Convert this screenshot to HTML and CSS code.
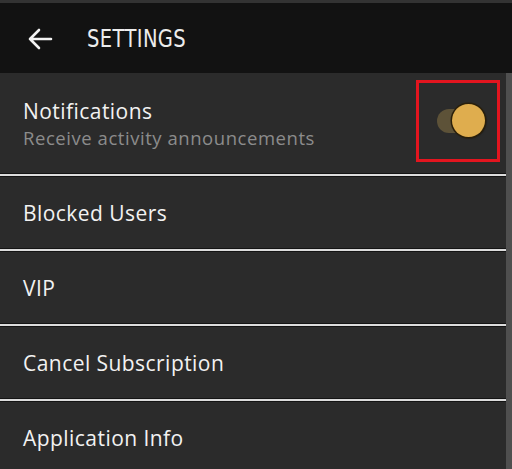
FILE: index.html
```html
<!DOCTYPE html>
<html>
<head>
<meta charset="utf-8">
<link rel="stylesheet" href="styles.css">
</head>
<body>
<div class="topstrip"></div>
<header class="appbar">
  <svg class="back" width="26" height="22" viewBox="0 0 26 22">
    <path d="M24 11H3M12 2L3 11l9 9" fill="none" stroke="#f2f2f2" stroke-width="2.6" stroke-linecap="round" stroke-linejoin="round"/>
  </svg>
  <h1 class="title">SETTINGS</h1>
</header>
<div class="content">
  <ul class="list">
    <li class="row row-tall">
      <div class="texts">
        <div class="label">Notifications</div>
        <div class="sub">Receive activity announcements</div>
      </div>
      <div class="highlight">
        <div class="switch"><div class="track"></div><div class="knob"></div></div>
      </div>
    </li>
    <li class="divider"></li>
    <li class="row"><div class="label">Blocked Users</div></li>
    <li class="divider"></li>
    <li class="row"><div class="label">VIP</div></li>
    <li class="divider"></li>
    <li class="row"><div class="label">Cancel Subscription</div></li>
    <li class="divider"></li>
    <li class="row"><div class="label">Application Info</div></li>
  </ul>
  <div class="scrollbar"></div>
</div>
</body>
</html>
```
FILE: styles.css
```css
html, body { margin: 0; padding: 0; }
body {
  width: 512px;
  height: 469px;
  overflow: hidden;
  background: #2b2b2b;
  font-family: "Open Sans", "Liberation Sans", sans-serif;
}
.topstrip { height: 3px; background: #333333; }
.appbar {
  height: 70px;
  background: #121212;
  display: flex;
  align-items: center;
  padding-left: 27px;
  box-sizing: border-box;
}
.back { display: block; margin-top: 1px; }
.title {
  margin: 0 0 0 34px;
  font-family: "DejaVu Sans", sans-serif;
  font-weight: normal;
  font-size: 25px;
  letter-spacing: 0.5px;
  color: #ececec;
  transform: scaleX(0.78);
  transform-origin: left center;
}
.content { display: flex; height: 396px; }
.list { list-style: none; margin: 0; padding: 0; flex: 1; }
.scrollbar { width: 6px; background: #4f4f4f; }
.row {
  height: 71px;
  display: flex;
  align-items: center;
  padding-left: 23px;
  background: #2b2b2b;
}
.row-tall { height: 100px; justify-content: space-between; padding-right: 6px; }
.label { font-size: 21px; letter-spacing: 0.45px; color: #f2f2f2; line-height: 26px; }
.sub { font-size: 18.5px; letter-spacing: 0.55px; color: #8c8c8c; line-height: 24px; margin-top: 2px; }
.texts { margin-top: 2px; }
.divider {
  height: 2px;
  background: #dcdcdc;
  border-top: 1px solid #141414;
  border-bottom: 1px solid #141414;
}
.highlight {
  width: 84px;
  height: 82px;
  box-sizing: border-box;
  border: 3px solid #e3151f;
  display: flex;
  align-items: center;
  justify-content: center;
  margin-top: -4px;
}
.switch { position: relative; width: 48px; height: 34px; margin-left: 6px; }
.track {
  position: absolute;
  left: 0; top: 5px;
  width: 34px; height: 24px;
  border-radius: 12px;
  background: #5d5238;
}
.knob {
  position: absolute;
  left: 15px; top: 0;
  width: 33px; height: 33px;
  border-radius: 50%;
  background: #dfad4e;
  box-shadow: 0 0 0 1.5px #2a1f0a, 1px 1px 2px rgba(0,0,0,0.6);
}
```
